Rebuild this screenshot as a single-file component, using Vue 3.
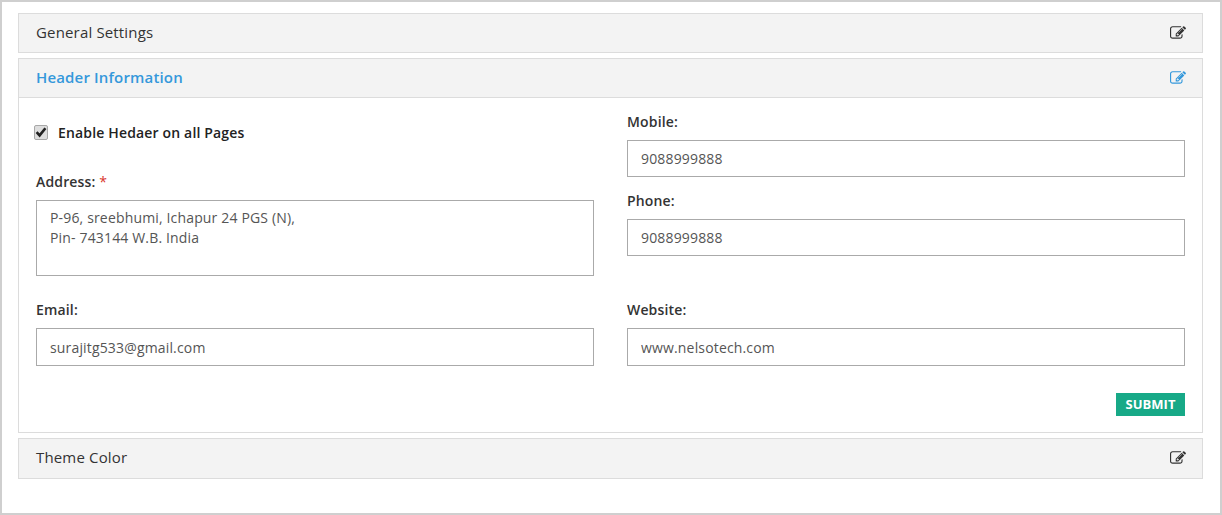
<script setup>
import { ref } from 'vue'
const editPath = 'M888 1184l116-116-152-152-116 116v56h96v96h56zm440-720q-16-16-33 1l-350 350q-17 17-1 33t33-1l350-350q17-17 1-33zm80 594v190q0 119-84.5 203.5t-203.5 84.5h-832q-119 0-203.5-84.5t-84.5-203.5v-832q0-119 84.5-203.5t203.5-84.5h832q63 0 117 25 15 7 18 23 3 17-9 29l-49 49q-14 14-32 8-23-6-45-6h-832q-66 0-113 47t-47 113v832q0 66 47 113t113 47h832q66 0 113-47t47-113v-126q0-13 9-22l64-64q15-15 35-7t20 29zm-96-738l288 288-672 672h-288v-288zm444 132l-92 92-288-288 92-92q28-28 68-28t68 28l152 152q28 28 28 68t-28 68z'
const address = ref('P-96, sreebhumi, Ichapur 24 PGS (N),\nPin- 743144 W.B. India')
</script>

<template>
  <div class="frame">
    <section class="panel">
      <header class="head">
        <span class="title">General Settings</span>
        <svg class="icon" viewBox="0 0 1792 1792"><path :d="editPath" fill="currentColor" /></svg>
      </header>
    </section>

    <section class="panel">
      <header class="head active">
        <span class="title">Header Information</span>
        <svg class="icon" viewBox="0 0 1792 1792"><path :d="editPath" fill="currentColor" /></svg>
      </header>
      <form class="body" @submit.prevent>
        <div class="grid">
          <div class="col">
            <label class="check">
              <span class="box">
                <svg viewBox="0 0 12 12"><path d="M1.6 6.2 4.6 9.4 10.4 2.2" fill="none" stroke="#222" stroke-width="2.6" /></svg>
              </span>
              Enable Hedaer on all Pages
            </label>
            <div class="field">
              <label>Address: <em>*</em></label>
              <textarea class="control area" v-model="address"></textarea>
            </div>
          </div>
          <div class="col">
            <div class="field stack">
              <label>Mobile:</label>
              <input class="control" value="9088999888" />
            </div>
            <div class="field">
              <label>Phone:</label>
              <input class="control" value="9088999888" />
            </div>
          </div>
          <div class="field lower">
            <label>Email:</label>
            <input class="control tall" value="surajitg533@gmail.com" />
          </div>
          <div class="field lower">
            <label>Website:</label>
            <input class="control tall" value="www.nelsotech.com" />
          </div>
        </div>
        <div class="actions">
          <button class="submit" type="submit">SUBMIT</button>
        </div>
      </form>
    </section>

    <section class="panel">
      <header class="head tallhead">
        <span class="title">Theme Color</span>
        <svg class="icon" viewBox="0 0 1792 1792"><path :d="editPath" fill="currentColor" /></svg>
      </header>
    </section>
  </div>
</template>

<style scoped>
.frame {
  box-sizing: border-box;
  width: 1222px;
  height: 515px;
  border: 2px solid #cfcfcf;
  background: #fff;
  padding: 11px 17px 0 16px;
  display: flex;
  flex-direction: column;
  gap: 5px;
  font-family: "Open Sans", sans-serif;
  color: #333;
  font-size: 14px;
  letter-spacing: 0.16px;
}
.panel {
  border: 1px solid #dcdcdc;
}
.head {
  box-sizing: border-box;
  height: 38px;
  background: #f3f3f3;
  display: flex;
  align-items: center;
  justify-content: space-between;
  padding: 0 16px 0 17px;
  font-size: 15px;
  color: #333;
}
.title {
  display: block;
  line-height: 20px;
  margin-bottom: 2px;
}
.tallhead {
  height: 39px;
}
.tallhead .title {
  margin-bottom: 3px;
}
.head.active {
  color: #3498db;
  font-weight: 600;
  border-bottom: 1px solid #dcdcdc;
  height: 39px;
}
.icon {
  width: 16px;
  height: 16px;
  display: block;
  margin-bottom: 1px;
}
.body {
  padding: 14px 17px 16px;
}
.grid {
  display: grid;
  grid-template-columns: 558px 558px;
  column-gap: 33px;
}
.col {
  display: flex;
  flex-direction: column;
}
.check {
  display: flex;
  align-items: center;
  gap: 10px;
  height: 20px;
  margin: 10px 0 30px -2px;
  font-weight: 600;
  color: #222;
}
.box {
  box-sizing: border-box;
  width: 14px;
  height: 15px;
  border: 1px solid #a8a8a8;
  border-radius: 2px;
  background: #dedede;
  display: flex;
  align-items: center;
  justify-content: center;
}
.box svg {
  width: 12px;
  height: 12px;
}
.field {
  display: flex;
  flex-direction: column;
}
.field label {
  display: block;
  height: 20px;
  line-height: 20px;
  margin-bottom: 8px;
  font-weight: 600;
  color: #333;
}
.field em {
  color: #d9342b;
  font-style: normal;
  font-weight: 400;
}
.stack {
  margin-bottom: 14px;
}
.lower {
  margin-top: 24px;
}
.control {
  box-sizing: border-box;
  width: 100%;
  height: 37px;
  border: 1px solid #aaa;
  border-radius: 0;
  background: #fff;
  padding: 0 13px;
  font: 14px/20px "Open Sans", sans-serif;
  letter-spacing: 0.16px;
  color: #555;
  outline: none;
  display: block;
}
.tall {
  height: 38px;
}
.area {
  height: 76px;
  padding: 7px 13px;
  resize: none;
}
.actions {
  display: flex;
  justify-content: flex-end;
  margin-top: 27px;
}
.submit {
  box-sizing: border-box;
  width: 69px;
  height: 23px;
  border: 0;
  padding: 0 0 2px;
  background: #17a987;
  color: #fff;
  font: 700 13px "Open Sans", sans-serif;
}
</style>
